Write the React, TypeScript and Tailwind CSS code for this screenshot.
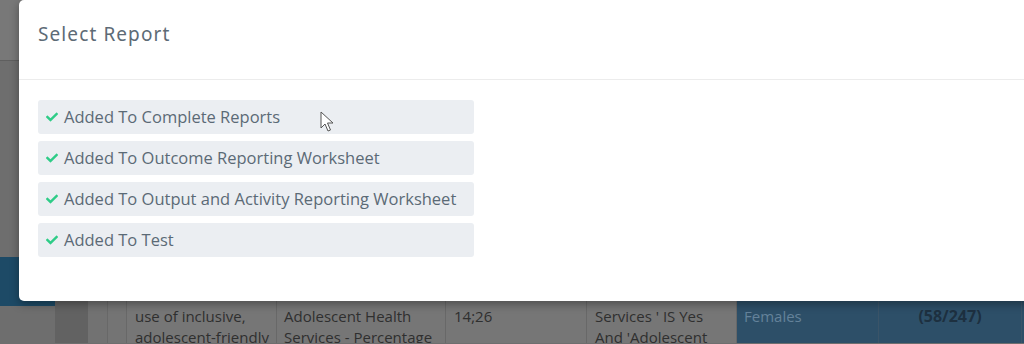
import React from "react";
import { FaCheck } from "react-icons/fa";

const items = [
  "Added To Complete Reports",
  "Added To Outcome Reporting Worksheet",
  "Added To Output and Activity Reporting Worksheet",
  "Added To Test",
];

function Backdrop() {
  return (
    <div className="flex h-[344px] w-[1024px] flex-col overflow-hidden bg-[#6e6e6e]" style={{ fontFamily: "'Open Sans', sans-serif" }}>
      <div className="h-[61px] shrink-0 border-b border-[#5f5f5f] bg-[#787878]" />
      <div className="flex min-h-0 flex-1">
        <div className="flex w-[55px] shrink-0 flex-col">
          <div className="h-[196px] shrink-0" />
          <div className="h-[49px] shrink-0 bg-[#1d4a66]" />
        </div>
        <div className="flex min-h-0 flex-1 flex-col">
          <div className="h-[235px] shrink-0" />
          <div className="flex h-[47px] shrink-0 overflow-hidden text-[15px] leading-[21px] text-[#2f2f2f]">
            <div className="w-[33px] bg-[#626262]" />
            <div className="w-[19px] bg-[#727272]" />
            <div className="w-[20px] border-x border-[#686868] bg-[#747474]" />
            <div className="w-[150px] border-r border-[#686868] bg-[#767676] pl-[8px] pt-[10px]">
              <div>use of inclusive,</div>
              <div>adolescent-friendly</div>
            </div>
            <div className="w-[169px] border-r border-[#686868] bg-[#767676] pl-[7px] pt-[10px]">
              <div>Adolescent Health</div>
              <div>Services - Percentage</div>
            </div>
            <div className="w-[141px] border-r border-[#686868] bg-[#767676] pl-[8px] pt-[10px]">
              <div>14;26</div>
            </div>
            <div className="w-[150px] border-r border-[#686868] bg-[#767676] pl-[8px] pt-[10px]">
              <div>Services ' IS Yes</div>
              <div>And 'Adolescent</div>
            </div>
            <div className="w-[142px] border-r border-[#3a5468] bg-[#2d4f68] pl-[7px] pt-[10px] text-[#64829a]">
              <div>Females</div>
            </div>
            <div className="w-[143px] border-r border-[#3a5468] bg-[#2d4f68] pt-[10px] text-center text-[16px] font-bold text-[#1d3040]">
              <div>(58/247)</div>
            </div>
            <div className="flex-1 bg-[#2d4f68]" />
          </div>
        </div>
      </div>
    </div>
  );
}

export default function App() {
  return (
    <div className="relative h-[344px] w-[1024px] overflow-hidden">
      <Backdrop />
      <div className="absolute left-[19px] top-0 h-[301px] w-[1020px] rounded-[5px] bg-white shadow-[0_3px_10px_rgba(0,0,0,0.35)]">
        <div className="flex h-[80px] items-center border-b border-[#ececec] pl-[19px] pb-[10px]">
          <h2
            className="text-[19px] tracking-[1.1px] text-[#5d6b76]"
            style={{ fontFamily: "'Noto Sans', 'Open Sans', sans-serif" }}
          >
            Select Report
          </h2>
        </div>
        <div className="flex w-[455px] flex-col gap-[7px] pl-[19px] pt-[20px]" style={{ fontFamily: "'Open Sans', sans-serif" }}>
          {items.map((t) => (
            <div key={t} className="flex h-[34px] items-center gap-[6px] rounded-[3px] bg-[#ebeef2] pl-[8px] text-[16.5px] text-[#5b6a76]">
              <FaCheck className="h-[12px] w-[12px] text-[#2ecc87]" />
              <span>{t}</span>
            </div>
          ))}
        </div>
      </div>
      <svg className="absolute left-[320px] top-[111px]" width="14" height="22" viewBox="0 0 14 22">
        <path d="M1 1 L1 17 L5 13 L8 20 L10.5 19 L7.5 12 L13 12 Z" fill="#fff" stroke="#555" strokeWidth="1" strokeLinejoin="round" />
      </svg>
    </div>
  );
}
